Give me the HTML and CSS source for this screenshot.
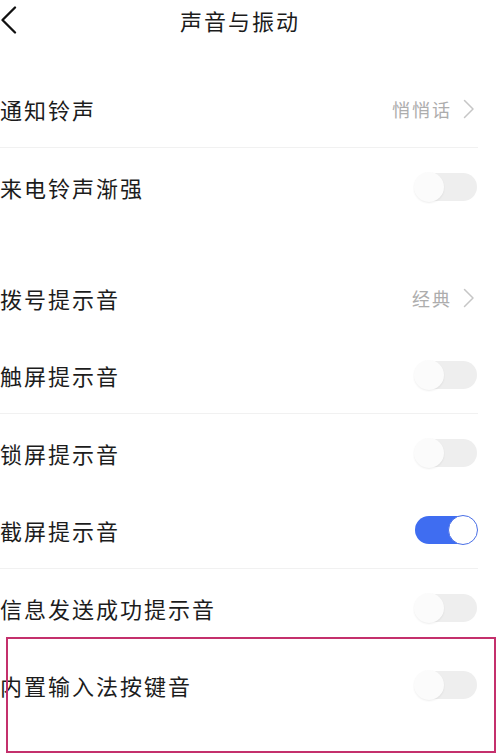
FILE: index.html
```html
<!DOCTYPE html>
<html lang="zh-CN">
<head>
<meta charset="utf-8">
<title>声音与振动</title>
<link rel="stylesheet" href="styles.css">
</head>
<body>
<div class="page">
  <header class="header">
    <svg class="back" width="18" height="28" viewBox="0 0 18 28"><polyline points="15,1.5 2.5,14 15,26.5" fill="none" stroke="#111" stroke-width="2.3" stroke-linecap="round" stroke-linejoin="round"/></svg>
    <h1 class="title">声音与振动</h1>
  </header>

  <section class="group group-first">
    <div class="row divided">
      <span class="label">通知铃声</span>
      <span class="value">悄悄话<svg class="chev" width="12" height="20" viewBox="0 0 12 20"><polyline points="1.5,1.5 10,10 1.5,18.5" fill="none" stroke="#c6c6c6" stroke-width="1.5" stroke-linecap="round" stroke-linejoin="round"/></svg></span>
    </div>
    <div class="row">
      <span class="label">来电铃声渐强</span>
      <span class="toggle"><span class="knob"></span></span>
    </div>
  </section>

  <section class="group group-second">
    <div class="row">
      <span class="label">拨号提示音</span>
      <span class="value">经典<svg class="chev" width="12" height="20" viewBox="0 0 12 20"><polyline points="1.5,1.5 10,10 1.5,18.5" fill="none" stroke="#c6c6c6" stroke-width="1.5" stroke-linecap="round" stroke-linejoin="round"/></svg></span>
    </div>
    <div class="row divided">
      <span class="label">触屏提示音</span>
      <span class="toggle"><span class="knob"></span></span>
    </div>
    <div class="row">
      <span class="label">锁屏提示音</span>
      <span class="toggle"><span class="knob"></span></span>
    </div>
    <div class="row divided">
      <span class="label">截屏提示音</span>
      <span class="toggle on"><span class="knob"></span></span>
    </div>
    <div class="row">
      <span class="label">信息发送成功提示音</span>
      <span class="toggle"><span class="knob"></span></span>
    </div>
    <div class="row">
      <span class="label">内置输入法按键音</span>
      <span class="toggle"><span class="knob"></span></span>
    </div>
  </section>

  <div class="highlight"></div>
</div>
</body>
</html>
```

FILE: styles.css
```css
* { box-sizing: border-box; }

html, body {
  margin: 0;
  padding: 0;
  background: #ffffff;
}

body {
  font-family: "Noto Sans CJK SC", "Noto Sans", sans-serif;
  color: #1c1c1c;
  width: 500px;
  height: 754px;
  overflow: hidden;
}

.page {
  position: relative;
  width: 500px;
  height: 754px;
}

.header {
  display: flex;
  align-items: center;
  height: 40px;
}

.back {
  display: block;
  margin-left: 0;
  flex: none;
}

.title {
  flex: 1;
  margin: 0;
  padding-right: 38px;
  text-align: center;
  font-size: 22px;
  font-weight: 400;
  letter-spacing: 2px;
  line-height: 1;
}

.group-first {
  margin-top: 30px;
}

.group-second {
  margin-top: 34px;
}

.row {
  display: flex;
  align-items: center;
  justify-content: space-between;
  height: 77px;
  padding-right: 23px;
}

.row.divided {
  position: relative;
  height: 78px;
  border-bottom: 1px solid #f1f1f1;
  margin-right: 22px;
  padding-right: 1px;
}

.label {
  font-size: 22px;
  letter-spacing: 2px;
  line-height: 1;
  white-space: nowrap;
}

.value {
  display: flex;
  align-items: center;
  gap: 11px;
  font-size: 18px;
  letter-spacing: 2px;
  line-height: 1;
  color: #adadad;
  padding-right: 2px;
}

.chev {
  display: block;
}

.toggle {
  display: flex;
  align-items: center;
  justify-content: flex-start;
  width: 62px;
  height: 28px;
  border-radius: 14px;
  background: #eeeeee;
}

.knob {
  display: block;
  width: 30px;
  height: 30px;
  margin-left: -1px;
  border-radius: 50%;
  background: #fbfbfb;
  box-shadow: 0 1px 2px rgba(0, 0, 0, 0.07);
}

.toggle.on {
  justify-content: flex-end;
  background: #3f6df1;
}

.toggle.on .knob {
  margin-left: 0;
  margin-right: -1px;
  background: #ffffff;
  border: 1.5px solid #4a6fe6;
  box-shadow: none;
}

.highlight {
  position: absolute;
  left: 6px;
  top: 637px;
  width: 490px;
  height: 116px;
  border: 2.5px solid #c4306c;
  pointer-events: none;
}
```
